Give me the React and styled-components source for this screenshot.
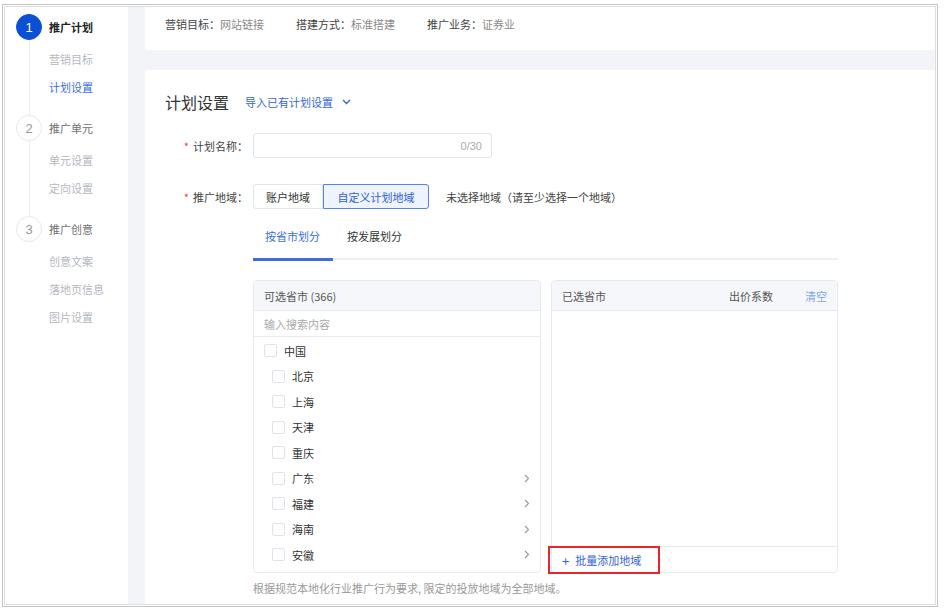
import React from "react";
import styled, { createGlobalStyle } from "styled-components";

const GlobalStyle = createGlobalStyle`
  body {
    margin: 0;
    background: #fff;
    font-family: "Noto Sans CJK SC", "Noto Sans", sans-serif;
    font-size: 11px;
    color: #333;
  }
  * { box-sizing: border-box; }
`;

const steps = [
  { no: 1, title: "推广计划", active: true, items: [{ name: "营销目标" }, { name: "计划设置", current: true }] },
  { no: 2, title: "推广单元", items: [{ name: "单元设置" }, { name: "定向设置" }] },
  { no: 3, title: "推广创意", items: [{ name: "创意文案" }, { name: "落地页信息" }, { name: "图片设置" }], last: true },
];

const summary = [
  ["营销目标", "网站链接"],
  ["搭建方式", "标准搭建"],
  ["推广业务", "证券业"],
];

const regions = [
  { name: "中国", level: 0 },
  { name: "北京", level: 1 },
  { name: "上海", level: 1 },
  { name: "天津", level: 1 },
  { name: "重庆", level: 1 },
  { name: "广东", level: 1, more: true },
  { name: "福建", level: 1, more: true },
  { name: "海南", level: 1, more: true },
  { name: "安徽", level: 1, more: true },
];

export default function App() {
  return (
    <Page>
      <GlobalStyle />
      <Frame>
        <Shell>
          <Sidebar>
            {steps.map((s) => (
              <div key={s.no}>
                <Step>
                  <StepDot $active={s.active}>{s.no}</StepDot>
                  <StepTitle $active={s.active}>{s.title}</StepTitle>
                </Step>
                <SubList $last={s.last}>
                  {s.items.map((it) => (
                    <SubItem key={it.name} $current={it.current}>
                      {it.name}
                    </SubItem>
                  ))}
                </SubList>
              </div>
            ))}
          </Sidebar>

          <Content>
            <TopCard>
              {summary.map(([k, v]) => (
                <Summary key={k}>
                  {k}：<span>{v}</span>
                </Summary>
              ))}
            </TopCard>

            <MainCard>
              <Heading>
                <h2>计划设置</h2>
                <ImportLink>
                  导入已有计划设置
                  <svg width="9" height="6" viewBox="0 0 9 6">
                    <polyline points="1,1 4.5,4.5 8,1" fill="none" stroke="currentColor" strokeWidth="1.4" />
                  </svg>
                </ImportLink>
              </Heading>

              <FormRow $top={19}>
                <Label>计划名称：</Label>
                <Input>
                  <span>0/30</span>
                </Input>
              </FormRow>

              <FormRow $top={26}>
                <Label>推广地域：</Label>
                <SegButton $width={70}>账户地域</SegButton>
                <SegButton $width={106} $active>自定义计划地域</SegButton>
                <Hint>未选择地域（请至少选择一个地域）</Hint>
              </FormRow>

              <Indent>
                <TabBar>
                  <Tab $active>按省市划分</Tab>
                  <Tab>按发展划分</Tab>
                </TabBar>

                <Panels>
                  <Panel>
                    <PanelHead>可选省市 (366)</PanelHead>
                    <Search>输入搜索内容</Search>
                    <List>
                      {regions.map((r) => (
                        <Row key={r.name} $level={r.level}>
                          <Check />
                          {r.name}
                          {r.more && (
                            <Chevron width="6" height="9" viewBox="0 0 6 9">
                              <polyline points="1,1 4.5,4.5 1,8" fill="none" stroke="currentColor" strokeWidth="1.1" />
                            </Chevron>
                          )}
                        </Row>
                      ))}
                    </List>
                  </Panel>

                  <Panel>
                    <PanelHead>
                      <Grow>已选省市</Grow>
                      出价系数
                      <Clear>清空</Clear>
                    </PanelHead>
                    <Grow />
                    <PanelFoot>
                      <BatchButton>
                        <b>+</b>批量添加地域
                      </BatchButton>
                    </PanelFoot>
                  </Panel>
                </Panels>

                <Note>根据规范本地化行业推广行为要求, 限定的投放地域为全部地域。</Note>
              </Indent>
            </MainCard>
          </Content>
        </Shell>
      </Frame>
    </Page>
  );
}

const Page = styled.div`
  padding: 4px 0 0 2px;
`;

const Frame = styled.div`
  width: 936px;
  height: 603px;
  border: 1px solid #c4c4c4;
  padding: 1px;
  background: #fff;
`;

const Shell = styled.div`
  height: 100%;
  border: 1px solid #dddddd;
  background: #f3f4f8;
  display: grid;
  grid-template-columns: 123px 1fr;
  column-gap: 17px;
`;

const Sidebar = styled.div`
  background: #fff;
  padding-top: 7px;
`;

const Step = styled.div`
  display: flex;
  align-items: center;
  gap: 7px;
  height: 26px;
  padding-left: 11px;
`;

const StepDot = styled.div`
  width: 26px;
  height: 26px;
  border-radius: 50%;
  display: flex;
  align-items: center;
  justify-content: center;
  font-family: "Liberation Sans", Arial, sans-serif;
  font-size: 13px;
  background: ${(p) => (p.$active ? "#0b50d4" : "#fff")};
  color: ${(p) => (p.$active ? "#fff" : "#999")};
  border: 1px solid ${(p) => (p.$active ? "#0b50d4" : "#e6e8ef")};
`;

const StepTitle = styled.div`
  font-size: 11px;
  font-weight: ${(p) => (p.$active ? 700 : 400)};
  color: ${(p) => (p.$active ? "#222" : "#707070")};
`;

const SubList = styled.div`
  margin-left: 24px;
  border-left: 1px solid ${(p) => (p.$last ? "transparent" : "#e9ebf1")};
  padding: 5px 0 14px 19px;
`;

const SubItem = styled.div`
  height: 28px;
  line-height: 28px;
  color: ${(p) => (p.$current ? "#3a6ee0" : "#b4b7c0")};
`;

const Content = styled.div`
  display: flex;
  flex-direction: column;
  gap: 20px;
`;

const TopCard = styled.div`
  height: 43px;
  background: #fff;
  padding: 9px 20px 0;
  display: flex;
  gap: 32px;
  align-items: flex-start;
`;

const Summary = styled.div`
  line-height: 16px;
  color: #444;
  span {
    color: #8a8a8a;
  }
`;

const MainCard = styled.div`
  flex: 1;
  background: #fff;
  padding: 20px 0 0 20px;
  display: flex;
  flex-direction: column;
`;

const Heading = styled.div`
  display: flex;
  align-items: center;
  gap: 16px;
  height: 24px;
  h2 {
    margin: 0;
    font-size: 16px;
    font-weight: 400;
    color: #333;
  }
`;

const ImportLink = styled.div`
  display: flex;
  align-items: center;
  gap: 9px;
  color: #3766dc;
  font-size: 11px;
`;

const FormRow = styled.div`
  display: flex;
  align-items: center;
  margin-top: ${(p) => p.$top}px;
`;

const Label = styled.div`
  width: 88px;
  padding-right: 5px;
  text-align: right;
  color: #444;
  &::before {
    content: "*";
    color: #e5483f;
    margin-right: 4px;
  }
`;

const Input = styled.div`
  width: 239px;
  height: 25px;
  border: 1px solid #e1e4eb;
  border-radius: 3px;
  display: flex;
  align-items: center;
  justify-content: flex-end;
  padding-right: 9px;
  span {
    color: #aaa;
    font-family: "Liberation Sans", Arial, sans-serif;
    font-size: 11px;
  }
`;

const SegButton = styled.div`
  width: ${(p) => p.$width}px;
  height: 25px;
  display: flex;
  align-items: center;
  justify-content: center;
  border: 1px solid ${(p) => (p.$active ? "#5484e8" : "#e1e4eb")};
  background: ${(p) => (p.$active ? "#eef3fd" : "#fff")};
  color: ${(p) => (p.$active ? "#2d61d9" : "#333")};
  border-radius: ${(p) => (p.$active ? "0 3px 3px 0" : "3px 0 0 3px")};
`;

const Hint = styled.div`
  margin-left: 17px;
  color: #444;
`;

const Indent = styled.div`
  margin-left: 88px;
`;

const TabBar = styled.div`
  width: 585px;
  margin-top: 12px;
  display: flex;
  border-bottom: 2px solid #eceef3;
`;

const Tab = styled.div`
  width: ${(p) => (p.$active ? 80 : 86)}px;
  padding: 7px 0 14px ${(p) => (p.$active ? 12 : 14)}px;
  line-height: 16px;
  margin-bottom: -3px;
  border-bottom: 3px solid ${(p) => (p.$active ? "#3a6ee0" : "transparent")};
  color: ${(p) => (p.$active ? "#3a6ee0" : "#333")};
`;

const Panels = styled.div`
  margin-top: 20px;
  display: grid;
  grid-template-columns: 288px 287px;
  column-gap: 10px;
  height: 293px;
`;

const Panel = styled.div`
  border: 1px solid #e6e9f0;
  border-radius: 4px;
  display: flex;
  flex-direction: column;
`;

const PanelHead = styled.div`
  height: 30px;
  flex-shrink: 0;
  background: #f6f7fa;
  border-bottom: 1px solid #e6e9f0;
  border-radius: 4px 4px 0 0;
  padding: 0 10px;
  display: flex;
  align-items: center;
  color: #555;
`;

const Grow = styled.div`
  flex: 1;
`;

const Clear = styled.span`
  margin-left: 32px;
  color: #7ba6f3;
`;

const Search = styled.div`
  height: 26px;
  border-bottom: 1px solid #e6e9f0;
  padding: 0 10px;
  display: flex;
  align-items: center;
  color: #aaa;
`;

const List = styled.div`
  padding-top: 1px;
`;

const Row = styled.div`
  height: 25.5px;
  display: flex;
  align-items: center;
  padding: 0 10px 0 ${(p) => (p.$level ? 18 : 10)}px;
  color: #333;
`;

const Check = styled.span`
  width: 13px;
  height: 13px;
  border: 1px solid #dfe2e9;
  border-radius: 2px;
  margin-right: 7px;
  background: #fff;
`;

const Chevron = styled.svg`
  margin-left: auto;
  color: #999;
`;

const PanelFoot = styled.div`
  height: 26px;
  border-top: 1px solid #e6e9f0;
  display: flex;
`;

const BatchButton = styled.div`
  width: 112px;
  height: 28px;
  margin: -1px 0 0 -4px;
  border: 2px solid #e5262b;
  display: flex;
  align-items: center;
  padding-left: 12px;
  color: #3563d8;
  b {
    font-weight: 400;
    font-size: 13px;
    margin-right: 6px;
  }
`;

const Note = styled.div`
  margin-top: 7px;
  line-height: 16px;
  color: #999;
`;
